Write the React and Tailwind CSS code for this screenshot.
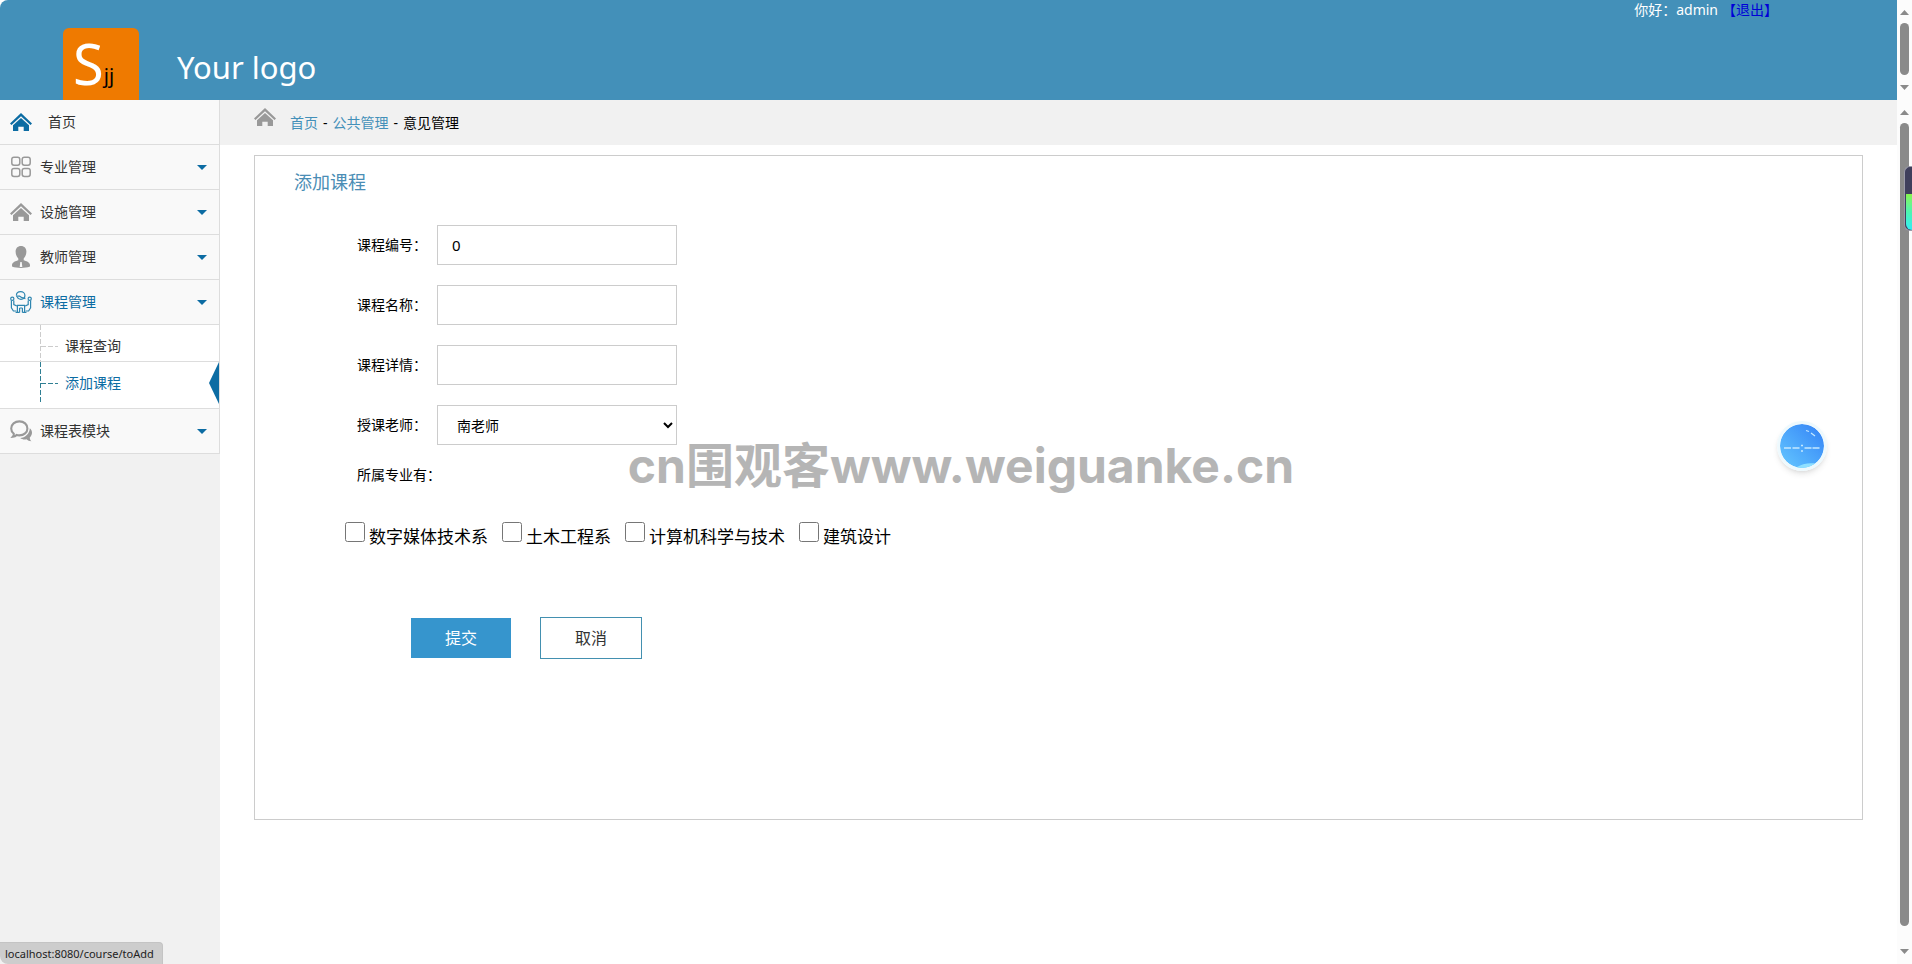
import React, { useState } from 'react';
import clsx from 'clsx';

const HomeIcon = ({ className }) => (
  <svg viewBox="0 0 22 18" className={clsx('w-[22px] h-[18px]', className)} fill="currentColor">
    <path d="M11 0 0 10.4 1.5 12.1 11 3.2l9.5 8.9 1.5-1.7z" />
    <path d="M11 4.9 3 12.3V18h5.3v-4.2h5.4V18H19v-5.7z" />
  </svg>
);

const GridIcon = () => (
  <svg viewBox="0 0 22 22" className="size-[22px]" fill="none" stroke="currentColor" strokeWidth="1.5">
    <rect x="1.8" y="1.2" width="8" height="8" rx="2.2" />
    <rect x="12.2" y="1.2" width="8" height="8" rx="2.2" />
    <rect x="1.8" y="12.4" width="8" height="8" rx="2.2" />
    <rect x="12.2" y="12.4" width="8" height="8" rx="2.2" />
  </svg>
);

const UserIcon = () => (
  <svg viewBox="0 0 22 22" className="size-[22px]" fill="currentColor">
    <path d="M11 0c3.4 0 5.4 2.4 5.4 5.8 0 2.7-1.3 5.4-2.7 6.6v1.8c2.2 1 6.3 1.6 6.3 5v1.4C17.4 21.600 14.4 22 11 22s-6.400-.4-9-1.400v-1.400c0-3.400 4.100-4 6.300-5v-1.800C6.900 11.200 5.600 8.500 5.600 5.800 5.600 2.400 7.600 0 11 0z" />
    <path d="M10.3 16h1.400l.6 5h-2.600z" fill="#f9f9f9" />
  </svg>
);

const CourseIcon = () => (
  <svg viewBox="0 0 22 22" className="size-[22px]" fill="none" stroke="currentColor" strokeWidth="1.2">
    <path d="M6.4 4.600C6.400 2.200 8.200.7 10.600.7s4.300 1.600 4.300 3.900c0 2.300-1.800 3.700-4 3.700-2 0-3.200-1-3.700-2.400" />
    <path d="M6 5.200h3.600l2.400 1.500 3.400 1" />
    <circle cx="2.300" cy="7.800" r="1.600" />
    <circle cx="19.700" cy="7.800" r="1.600" />
    <path d="M1.400 9.600v7.200l2 3.200h3M3.800 9.600v4l3 1.400M20.600 9.600v7.200l-2 3.200h-3M18.200 9.600v4l-3 1.400" />
    <path d="M6.800 14.400h8.400M7.400 14.400v7M14.600 14.400v7M9.600 17v4.400M12.400 17v4.400M9.600 17h2.800M5.600 21.400h4M12.400 21.400h4" />
  </svg>
);

const ChatIcon = () => (
  <svg viewBox="0 0 22 22" className="size-[22px]">
    <path
      d="M9.4 1.400c4.600 0 8 3 8 7s-3.400 7-8 7c-1 0-2-.1-2.800-.4-1 1.100-2.200 1.700-3.800 1.800.8-.9 1.100-1.800 1-3C2.200 12.500 1.200 10.600 1.200 8.400c0-4 3.600-7 8.200-7z"
      fill="none"
      stroke="currentColor"
      strokeWidth="2.1"
    />
    <path
      d="M19.8 8.200c1.500 1.200 2.200 2.800 2.200 4.500 0 1.900-.9 3.500-2.200 4.700 0 1.500.4 2.700 1.600 3.900-2 0-3.700-.8-4.900-2-2.400.5-4.700 0-6.300-1.300 5-.4 9.400-4.200 9.600-9.800z"
      fill="currentColor"
    />
  </svg>
);

const menu = [
  { label: '专业管理', icon: <GridIcon /> },
  { label: '设施管理', icon: <HomeIcon /> },
  { label: '教师管理', icon: <UserIcon /> },
  { label: '课程管理', icon: <CourseIcon />, active: true, open: true },
  { label: '课程表模块', icon: <ChatIcon /> },
];

const majors = ['数字媒体技术系', '土木工程系', '计算机科学与技术', '建筑设计'];

const Scrollbar = ({ bottomClass }) => (
  <div className="w-[15px] shrink-0 bg-[#fcfcfc] flex flex-col items-center">
    <svg viewBox="0 0 9 5" className="w-[9px] h-[5px] mt-[10px] mb-2 shrink-0" fill="#8a8a8a">
      <path d="M4.5 0 9 5H0z" />
    </svg>
    <div className="w-[9px] flex-1 rounded-full bg-[#8a8a8a]" />
    <svg viewBox="0 0 9 5" className={clsx('w-[9px] h-[5px] shrink-0', bottomClass)} fill="#8a8a8a">
      <path d="M4.5 5 9 0H0z" />
    </svg>
  </div>
);

const Header = () => (
  <header className="flex h-[100px] shrink-0">
    <div className="flex-1 bg-[#4390b9] rounded-tl-lg flex justify-between">
      <div className="flex items-end pl-[63px]">
        <div className="w-[76px] h-[72px] bg-[#ef7a00] rounded-t-md flex items-end pl-[10px]">
          <span className="text-[56px] leading-[74px] text-white">S</span>
          <span className="text-xl leading-[48px] text-black">jj</span>
        </div>
        <span className="ml-[38px] text-[31px] leading-[66px] text-white">Your logo</span>
      </div>
      <div className="text-sm text-white pr-[119px] flex gap-1">
        <span>你好：admin</span>
        <a href="#logout" className="text-[#0000d8]">【退出】</a>
      </div>
    </div>
    <Scrollbar bottomClass="mt-[10px] mb-[10px]" />
  </header>
);

const SubMenu = () => (
  <ul>
    <li className="flex h-[37px] border-b border-[#ddd] bg-white">
      <a href="#course-query" className="flex flex-1 items-center">
        <svg viewBox="0 0 20 36" className="w-5 h-9 ml-10" fill="none" stroke="#ccc" strokeDasharray="5 2">
          <path d="M.5 0V36M1 21.5H18" />
        </svg>
        <span className="ml-[5px] pt-[6px]">课程查询</span>
      </a>
    </li>
    <li className="flex h-[47px] border-b border-[#ddd] bg-white">
      <a href="#course-add" className="flex flex-1 items-start text-[#0c6ca3]">
        <svg viewBox="0 0 20 42" className="w-5 h-[42px] ml-10" fill="none" stroke="#2f7f93" strokeDasharray="5 2">
          <path d="M.5 0V42M1 21.5H18" />
        </svg>
        <span className="ml-[5px] flex-1 leading-[42px]">添加课程</span>
        <svg viewBox="0 0 10 42" className="w-[10px] h-[42px]" fill="#0c6ca3">
          <path d="M10 0V42L0 21z" />
        </svg>
      </a>
    </li>
  </ul>
);

const Sidebar = () => (
  <aside className="w-[220px] shrink-0 bg-[#f1f1f1] text-sm text-[#333]">
    <nav className="border-r border-[#ddd]">
      <a href="#home" className="flex items-center h-[45px] pl-[10px] border-b border-[#ddd] bg-[#f9f9f9]">
        <HomeIcon className="text-[#0c6ca3]" />
        <span className="ml-4">首页</span>
      </a>
      {menu.map((item) => (
        <div key={item.label}>
          <button
            className={clsx(
              'flex items-center w-full h-[45px] pl-[10px] pr-3 border-b border-[#ddd] bg-[#f9f9f9]',
              item.active && 'text-[#0c6ca3]'
            )}
          >
            <span className={item.active ? 'text-[#2f86b0]' : 'text-[#999]'}>{item.icon}</span>
            <span className="ml-2 flex-1 text-left">{item.label}</span>
            <svg viewBox="0 0 10 5" className="w-[10px] h-[5px]" fill="#0c6ca3">
              <path d="M0 0H10L5 5z" />
            </svg>
          </button>
          {item.open && <SubMenu />}
        </div>
      ))}
    </nav>
  </aside>
);

const Field = ({ id, label, children }) => (
  <div className="flex items-center">
    <label htmlFor={id} className="w-20 text-sm">{label}</label>
    {children}
  </div>
);

const CourseForm = () => {
  const [course, setCourse] = useState({ code: '0', name: '', detail: '' });
  const update = (e) => setCourse({ ...course, [e.target.name]: e.target.value });
  const inputClass = 'w-60 h-10 border border-[#ccc] px-[14px] text-[15px] bg-white';

  return (
    <form className="mt-[29px] text-black" onSubmit={(e) => e.preventDefault()}>
      <div className="pl-[102px] flex flex-col gap-5">
        <Field id="code" label="课程编号：">
          <input id="code" name="code" value={course.code} onChange={update} className={inputClass} />
        </Field>
        <Field id="name" label="课程名称：">
          <input id="name" name="name" value={course.name} onChange={update} className={inputClass} />
        </Field>
        <Field id="detail" label="课程详情：">
          <input id="detail" name="detail" value={course.detail} onChange={update} className={inputClass} />
        </Field>
        <Field id="teacher" label="授课老师：">
          <select id="teacher" className="w-60 h-10 border border-[#ccc] pl-[15px] text-sm bg-white">
            <option>南老师</option>
          </select>
        </Field>
        <p className="text-sm">所属专业有：</p>
      </div>

      <div className="mt-[37px] pl-[90px] flex gap-[14px]">
        {majors.map((major) => (
          <label key={major} className="flex items-start gap-1 text-[17px] leading-[30px]">
            <input type="checkbox" className="size-5" />
            {major}
          </label>
        ))}
      </div>

      <div className="mt-[65px] pl-[156px] flex items-center gap-[29px]">
        <button type="submit" className="w-[100px] h-10 bg-[#3695cd] text-white text-base">提交</button>
        <button type="button" className="w-[102px] h-[42px] border border-[#4390b0] text-[#333] text-base">取消</button>
      </div>
    </form>
  );
};

const FloatingBall = () => (
  <button
    aria-label="assistant"
    className="absolute right-[85px] top-[421px] size-[50px] rounded-full border-3 border-[#eef9fd] bg-linear-to-tr from-[#66c8ff] to-[#3580f5] bg-clip-padding shadow-md overflow-hidden"
  >
    <svg viewBox="0 0 44 44" className="size-full" fill="none" stroke="#c4e8ff">
      <path d="M4 24h7M12.5 24h7M24.5 24h7M32.5 24h7" strokeWidth="1.6" />
      <path d="M21 21.5h2M21 27h2" strokeWidth="1.5" />
      <path d="M26 6.500l3 1M31 9l4 3" strokeWidth="1.2" />
      <path d="M16 43.500c6-4 13-5 20-4-4 4-12 6-20 4z" fill="#8fe0ff" stroke="none" />
    </svg>
  </button>
);

const App = () => {
  return (
    <div className="relative min-h-screen flex flex-col bg-white overflow-hidden font-['Noto_Sans','Noto_Sans_CJK_SC',sans-serif]">
      <Header />
      <div className="flex flex-1">
        <Sidebar />
        <main className="flex-1">
          <div className="flex h-[45px] bg-[#f1f1f1] pl-[34px] text-sm">
            <HomeIcon className="mt-2 text-[#999]" />
            <div className="ml-[14px] leading-[45px] text-black">
              <a href="#home" className="text-[#4390b9]">首页</a>
              <span className="px-[5px]">-</span>
              <a href="#public" className="text-[#4390b9]">公共管理</a>
              <span className="px-[5px]">-</span>
              <span>意见管理</span>
            </div>
          </div>
          <section className="mx-[34px] mt-[10px] min-h-[665px] border border-[#ccc]">
            <h2 className="pl-[39px] pt-3 text-lg text-[#4a8db5]">添加课程</h2>
            <CourseForm />
          </section>
        </main>
        <Scrollbar bottomClass="mt-[23px] mb-[10px]" />
      </div>

      <FloatingBall />

      <div className="absolute right-0 top-[166px] w-2 h-[65px] rounded-l-md border border-r-0 border-[#9a9aa8] bg-[#3f3f5c] overflow-hidden flex flex-col justify-end">
        <div className="h-9 ml-px rounded-bl-md bg-linear-to-b from-[#86f54a] via-[#4df5b0] to-[#33ecf5]" />
      </div>

      <div className="absolute inset-x-0 top-[436px] pl-[10px] text-center whitespace-nowrap pointer-events-none text-[48px] leading-[60px] font-bold text-[#b5b5b5] font-['Inter','Noto_Sans_CJK_SC',sans-serif]">
        cn围观客www.weiguanke.cn
      </div>

      <div className="absolute left-0 bottom-0 h-[22px] px-[5px] pr-2 rounded-tr rounded-bl-lg border-t border-r border-[#c4c4c4] bg-[#cdcdcd] text-[11px] leading-[22px] text-[#222]">
        localhost:8080/course/toAdd
      </div>
    </div>
  );
};

export default App;
